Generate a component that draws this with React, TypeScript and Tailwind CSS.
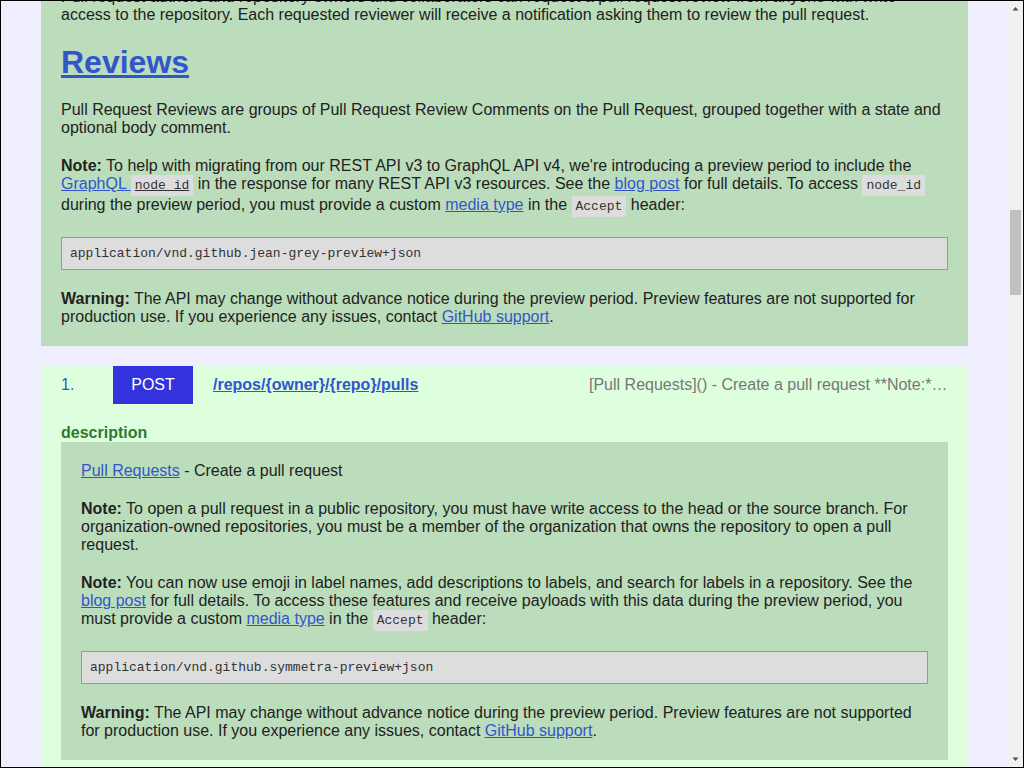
import { useLayoutEffect, useRef } from "react";
import type { ReactNode } from "react";

const A = ({ children }: { children: ReactNode }) => (
  <a href="#" className="text-[#3355cc] underline">
    {children}
  </a>
);

const C = ({ children, u }: { children: ReactNode; u?: boolean }) => (
  <code
    className={
      u
        ? "inline-block font-['Liberation_Mono',monospace] text-[13px] leading-[normal] bg-[#dddddd] text-[#333333] px-1 py-[3px] underline"
        : "inline-block font-['Liberation_Mono',monospace] text-[13px] leading-[normal] bg-[#dddddd] text-[#333333] px-1 py-[3px]"
    }
  >
    {children}
  </code>
);

const Pre = ({ children }: { children: ReactNode }) => (
  <pre className="font-['Liberation_Mono',monospace] text-[13px] leading-[normal] text-[#333333] bg-[#dddddd] border border-[#999999] px-2 py-2 whitespace-pre-wrap">
    {children}
  </pre>
);

const H2 = ({ children, hRef }: { children: ReactNode; hRef?: React.Ref<HTMLHeadingElement> }) => (
  <h2 ref={hRef} className="text-[32px] font-bold leading-[normal]">
    <a href="#" className="text-[#3355cc] underline">
      {children}
    </a>
  </h2>
);

type Ep = [string, string, string];

const methodColor: Record<string, string> = {
  POST: "bg-[#3333dd]",
  GET: "bg-[#33aa33]",
  PATCH: "bg-[#dd8833]",
  PUT: "bg-[#aa33aa]",
  DELETE: "bg-[#dd3333]",
};

const endpoints: Ep[] = [
  ["GET", "/repos/{owner}/{repo}/pulls", "[Pull Requests]() - List pull requests Draft pull requests are available in public repositories…"],
  ["GET", "/repos/{owner}/{repo}/pulls/comments", "Lists review comments for all pull requests in a repository. By default…"],
  ["GET", "/repos/{owner}/{repo}/pulls/comments/{comment_id}", "Provides details for a review comment."],
  ["PATCH", "/repos/{owner}/{repo}/pulls/comments/{comment_id}", "Enables you to edit a review comment."],
  ["DELETE", "/repos/{owner}/{repo}/pulls/comments/{comment_id}", "Deletes a review comment."],
  ["GET", "/repos/{owner}/{repo}/pulls/{pull_number}", "Draft pull requests are available in public repositories with GitHub Free…"],
  ["PATCH", "/repos/{owner}/{repo}/pulls/{pull_number}", "Draft pull requests are available in public repositories with GitHub Free…"],
  ["GET", "/repos/{owner}/{repo}/pulls/{pull_number}/comments", "Lists all review comments for a pull request. By default, review comments…"],
  ["POST", "/repos/{owner}/{repo}/pulls/{pull_number}/comments", "Creates a review comment in the pull request diff. To add a regular comment…"],
  ["GET", "/repos/{owner}/{repo}/pulls/{pull_number}/commits", "Lists a maximum of 250 commits for a pull request…"],
  ["GET", "/repos/{owner}/{repo}/pulls/{pull_number}/files", "**Note:** Responses include a maximum of 3000 files…"],
  ["GET", "/repos/{owner}/{repo}/pulls/{pull_number}/merge", "Check if a pull request has been merged"],
  ["PUT", "/repos/{owner}/{repo}/pulls/{pull_number}/merge", "This endpoint triggers notifications. Creating content too quickly…"],
  ["GET", "/repos/{owner}/{repo}/pulls/{pull_number}/reviews", "The list of reviews returns in chronological order."],
  ["POST", "/repos/{owner}/{repo}/pulls/{pull_number}/reviews", "This endpoint triggers notifications. Creating content too quickly…"],
  ["PUT", "/repos/{owner}/{repo}/pulls/{pull_number}/update-branch", "Updates the pull request branch with the latest upstream changes…"],
];

function Row({ n, method, path, summary }: { n: number; method: string; path: string; summary: string }) {
  return (
    <div className="flex items-center">
      <span className="w-[52px] shrink-0 text-[#3355cc]">{n}.</span>
      <span className={`w-20 h-[38px] shrink-0 flex items-center justify-center text-white ${methodColor[method]}`}>
        {method}
      </span>
      <a href="#" className="ml-5 font-bold text-[#3355cc] underline whitespace-nowrap">
        {path}
      </a>
      <span className="ml-auto w-[359px] shrink-0 truncate text-[#777777]">{summary}</span>
    </div>
  );
}

function ScrollBar() {
  return (
    <div className="w-[15px] shrink-0 bg-[#f1f1f1] flex flex-col">
      <div className="h-[15px] flex items-center justify-center">
        <svg width="15" height="15" viewBox="0 0 15 15">
          <polygon points="4.5,9.5 7.5,6 10.5,9.5" fill="#505050" />
        </svg>
      </div>
      <div className="flex-1 px-[2px]">
        <div className="mt-[194px] h-[85px] bg-[#c1c1c1]" />
      </div>
      <div className="h-[15px] flex items-center justify-center">
        <svg width="15" height="15" viewBox="0 0 15 15">
          <polygon points="4.5,5.5 7.5,9 10.5,5.5" fill="#505050" />
        </svg>
      </div>
    </div>
  );
}

export default function App() {
  const boxRef = useRef<HTMLDivElement>(null);
  const hRef = useRef<HTMLHeadingElement>(null);

  useLayoutEffect(() => {
    const box = boxRef.current;
    const h = hRef.current;
    if (box && h) {
      box.scrollTop = 0;
      const top = h.getBoundingClientRect().top - box.getBoundingClientRect().top;
      box.scrollTop = Math.round(top - 43.5);
    }
  }, []);

  return (
    <div className="h-screen border border-black flex font-['Liberation_Sans',Arial,sans-serif] text-[16px] leading-[normal] text-[#222222]">
      <div ref={boxRef} className="flex-1 min-w-0 overflow-hidden bg-[#eeeeff]">
        <div className="px-10 py-5 flex flex-col gap-5">
          <h1 className="text-[32px] font-bold">GitHub v3 REST API</h1>
          <p>GitHub's v3 REST API.</p>
          <h1 className="text-[28px] font-bold text-[#336633]">pulls</h1>

          <section className="bg-[#bbddbb] p-5 flex flex-col gap-5">
            <p>
              The Pull Request API allows you to list, view, edit, create, and even merge pull requests. Comments on pull
              requests can be managed via the <A>Issue Comments API</A>.
            </p>
            <p>
              Every pull request is an issue, but not every issue is a pull request. For this reason, "shared" actions for
              both features, like manipulating assignees, labels and milestones, are provided within{" "}
              <A>the Issues API</A>.
            </p>
            <H2>Custom media types for pull requests</H2>
            <p>
              These are the supported media types for pull requests. You can read more about the use of media types in the
              API <A>here</A>.
            </p>
            <Pre>
              {"application/vnd.github.VERSION.raw+json\napplication/vnd.github.VERSION.text+json\napplication/vnd.github.VERSION.html+json\napplication/vnd.github.VERSION.full+json\napplication/vnd.github.VERSION.diff\napplication/vnd.github.VERSION.patch"}
            </Pre>
            <p>
              If a diff is corrupt, contact <A>GitHub Support</A>. Include the repository name and pull request ID in your
              message.
            </p>
            <H2>Link Relations</H2>
            <p>Pull Requests have these possible link relations:</p>
            <ul className="list-disc pl-10">
              <li><C>self</C> The API location of this Pull Request.</li>
              <li><C>html</C> The HTML location of this Pull Request.</li>
              <li><C>issue</C> The API location of this Pull Request's Issue.</li>
              <li><C>comments</C> The API location of this Pull Request's Issue comments.</li>
              <li><C>review_comments</C> The API location of this Pull Request's Review comments.</li>
              <li><C>review_comment</C> The URL template to construct the API location for a Review comment in this Pull Request's repository.</li>
              <li><C>commits</C> The API location of this Pull Request's commits.</li>
              <li><C>statuses</C> The API location of this Pull Request's commit statuses, which are the statuses of its <C>head</C> branch.</li>
            </ul>
            <H2>Review Comments</H2>
            <p>
              Pull request review comments are comments on a portion of the unified diff made during a pull request review.
              Commit comments and issue comments are different from pull request review comments. You apply commit comments
              directly to a commit and you apply issue comments without referencing a portion of the unified diff. For more
              information, see "<A>Create a commit comment</A>" and "<A>Create an issue comment</A>."
            </p>
            <H2>Review Requests</H2>
            <p>
              Pull request authors and repository owners and collaborators can request a pull request review from anyone
              with write access to the repository. Each requested reviewer will receive a notification asking them to review
              the pull request.
            </p>
            <H2 hRef={hRef}>Reviews</H2>
            <p>
              Pull Request Reviews are groups of Pull Request Review Comments on the Pull Request, grouped together with a
              state and optional body comment.
            </p>
            <p>
              <strong>Note:</strong> To help with migrating from our REST API v3 to GraphQL API v4, we're introducing a
              preview period to include the{" "}
              <A>
                GraphQL <C u>node_id</C>
              </A>{" "}
              in the response for many REST API v3 resources. See the <A>blog post</A> for full details. To access{" "}
              <C>node_id</C> during the preview period, you must provide a custom <A>media type</A> in the <C>Accept</C>{" "}
              header:
            </p>
            <Pre>application/vnd.github.jean-grey-preview+json</Pre>
            <p>
              <strong>Warning:</strong> The API may change without advance notice during the preview period. Preview
              features are not supported for production use. If you experience any issues, contact <A>GitHub support</A>.
            </p>
          </section>

          <section className="bg-[#ddffdd] pb-5 px-5">
            <Row
              n={1}
              method="POST"
              path="/repos/{owner}/{repo}/pulls"
              summary="[Pull Requests]() - Create a pull request **Note:** To open a pull request in a public repository"
            />
            <div className="mt-5 font-bold text-[#337733]">description</div>
            <div className="bg-[#bbddbb] p-5 flex flex-col gap-5">
              <p>
                <A>Pull Requests</A> - Create a pull request
              </p>
              <p>
                <strong>Note:</strong> To open a pull request in a public repository, you must have write access to the head
                or the source branch. For organization-owned repositories, you must be a member of the organization that owns
                the repository to open a pull request.
              </p>
              <p>
                <strong>Note:</strong> You can now use emoji in label names, add descriptions to labels, and search for labels
                in a repository. See the <A>blog post</A> for full details. To access these features and receive payloads
                with this data during the preview period, you must provide a custom <A>media type</A> in the <C>Accept</C>{" "}
                header:
              </p>
              <Pre>application/vnd.github.symmetra-preview+json</Pre>
              <p>
                <strong>Warning:</strong> The API may change without advance notice during the preview period. Preview
                features are not supported for production use. If you experience any issues, contact <A>GitHub support</A>.
              </p>
            </div>
            <div className="mt-5 font-bold text-[#337733]">parameters</div>
            <div className="bg-[#bbddbb] p-5 flex flex-col gap-2">
              <div><C>owner</C> path, string, required</div>
              <div><C>repo</C> path, string, required</div>
              <div><C>body</C> body, object: title, head, base, body, maintainer_can_modify, draft, issue</div>
            </div>
            <div className="mt-5 font-bold text-[#337733]">responses</div>
            <div className="bg-[#bbddbb] p-5 flex flex-col gap-2">
              <div><strong>201</strong> response</div>
              <div><strong>403</strong> Forbidden</div>
              <div><strong>422</strong> Validation Failed</div>
            </div>
          </section>

          {endpoints.map((e, i) => (
            <section key={i} className="bg-[#ddffdd] pb-5 px-5">
              <Row n={i + 2} method={e[0]} path={e[1]} summary={e[2]} />
            </section>
          ))}
        </div>
      </div>
      <ScrollBar />
    </div>
  );
}
